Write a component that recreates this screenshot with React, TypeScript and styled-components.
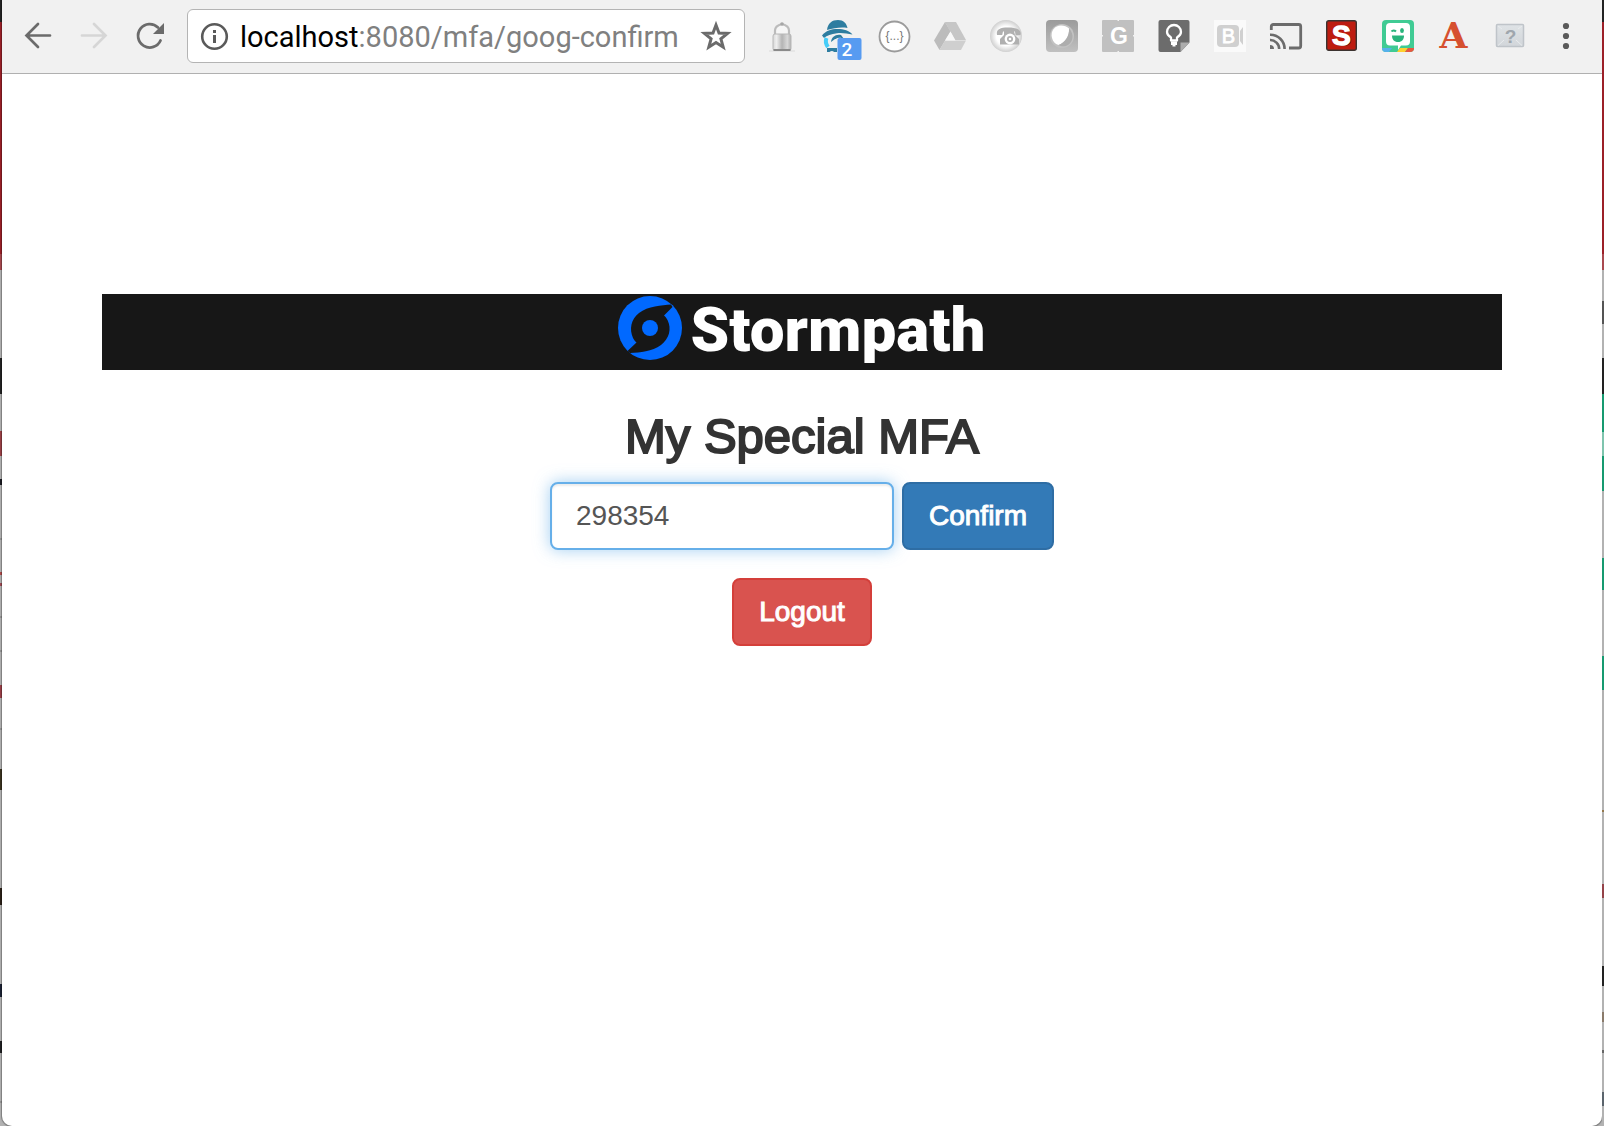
import React, { useState } from "react";
import styled, { createGlobalStyle } from "styled-components";

type Band = [from: number, to: number, color: string];

const GRAY = "#b2b2b2";

const leftBands: Band[] = [
  [0, 22, "#232323"],
  [22, 254, "#9c2028"],
  [254, 270, "#a94a50"],
  [358, 394, "#222222"],
  [431, 456, "#9c4146"],
  [479, 485, "#1b1b22"],
  [538, 540, "#969696"],
  [572, 575, "#b04a4a"],
  [583, 586, "#a04a54"],
  [616, 618, "#969696"],
  [650, 652, "#969696"],
  [685, 698, "#9c3f48"],
  [728, 730, "#969696"],
  [769, 790, "#3b3420"],
  [888, 905, "#2c2118"],
  [984, 997, "#1b2133"],
  [1041, 1053, "#1f2022"],
  [1101, 1103, "#969696"],
];

const rightBands: Band[] = [
  [0, 22, "#232323"],
  [22, 254, "#9c2028"],
  [254, 270, "#a94a50"],
  [301, 324, "#545454"],
  [358, 394, "#222222"],
  [394, 432, "#169a70"],
  [432, 456, "#7fc4ae"],
  [456, 491, "#169a70"],
  [558, 590, "#169a70"],
  [656, 690, "#169a70"],
  [810, 812, "#94784c"],
  [884, 898, "#944349"],
  [966, 986, "#222222"],
  [1012, 1022, "#8a7a6a"],
  [1050, 1053, "#666666"],
  [1092, 1106, "#5a646c"],
];

const toGradient = (bands: Band[]) => {
  const stops: string[] = [];
  let cursor = 0;
  bands.forEach(([from, to, color]) => {
    if (from > cursor) stops.push(`${GRAY} ${cursor}px ${from}px`);
    stops.push(`${color} ${from}px ${to}px`);
    cursor = to;
  });
  stops.push(`${GRAY} ${cursor}px`);
  return `linear-gradient(to bottom, ${stops.join(", ")})`;
};

const GlobalStyle = createGlobalStyle`
  *, *::before, *::after { box-sizing: border-box; }
  body { margin: 0; background: ${GRAY}; }
  button, input { font: inherit; margin: 0; }
`;

const Desktop = styled.div`
  display: flex;
  min-height: 100vh;
  background: ${GRAY};
  font-family: "Liberation Sans", Arial, sans-serif;
`;

const DesktopEdge = styled.div<{ $bands: Band[] }>`
  flex: 0 0 2px;
  background: ${({ $bands }) => toGradient($bands)};
`;

const BrowserWindow = styled.div`
  flex: 1;
  min-width: 0;
  display: flex;
  flex-direction: column;
  background: #fff;
  border-radius: 0 0 10px 10px;
  box-shadow: 0 0 1px 1px rgba(0, 0, 0, 0.3);
  overflow: hidden;
`;

const Toolbar = styled.header`
  display: flex;
  align-items: center;
  gap: 21px;
  padding: 9px 20px 10px;
  background: #f1f1f1;
  border-bottom: 1px solid #b0b0b0;
`;

const IconRow = styled.div`
  display: flex;
  align-items: center;
  gap: 24px;
`;

const IconButton = styled.button`
  flex: none;
  width: 32px;
  height: 32px;
  padding: 0;
  border: 0;
  background: none;
  color: #6b6b6b;
  cursor: pointer;

  &:disabled {
    color: #d6d6d6;
    cursor: default;
  }

  svg {
    display: block;
    overflow: visible;
  }
`;

const AddressBar = styled.div`
  flex: 1;
  min-width: 0;
  height: 54px;
  display: flex;
  align-items: center;
  gap: 9px;
  padding: 0 12px 0 11px;
  background: #fff;
  border: 1px solid #b4b4b4;
  border-radius: 6px;
`;

const Url = styled.div`
  flex: 1;
  min-width: 0;
  padding-top: 2px;
  overflow: hidden;
  white-space: nowrap;
  font-family: Roboto, sans-serif;
  font-size: 29px;
  line-height: 36px;
  color: #808080;
  outline: none;
`;

const Host = styled.span`
  color: #000;
`;

const Page = styled.main`
  display: flex;
  flex-direction: column;
  padding: 220px 100px 0;
`;

const Banner = styled.div`
  display: flex;
  justify-content: center;
  align-items: flex-start;
  gap: 8px;
  height: 76px;
  padding-top: 2px;
  background: #171717;
  color: #fff;
`;

const BrandMark = styled.svg`
  flex: none;
  width: 64px;
  height: 64px;
`;

const BrandName = styled.span`
  font-family: Roboto, "Open Sans", sans-serif;
  font-weight: 900;
  font-size: 62px;
  line-height: 68px;
`;

const Title = styled.h1`
  margin: 40px 0 20px;
  text-align: center;
  font-size: 49px;
  line-height: 52px;
  font-weight: 400;
  color: #333;
  -webkit-text-stroke: 2px #333;
`;

const ConfirmForm = styled.form`
  display: flex;
  justify-content: center;
  gap: 8px;
  margin-bottom: 28px;
`;

const CodeInput = styled.input`
  width: 344px;
  height: 68px;
  padding: 0 24px;
  border: 2px solid #66afe9;
  border-radius: 8px;
  outline: none;
  background: #fff;
  color: #555;
  font-size: 28px;
  box-shadow: inset 0 2px 2px rgba(0, 0, 0, 0.075),
    0 0 16px rgba(102, 175, 233, 0.6);
`;

const ActionButton = styled.button<{ $tone: "primary" | "danger" }>`
  height: 68px;
  padding: 0 25px;
  border: 2px solid ${({ $tone }) => ($tone === "primary" ? "#2e6da4" : "#d43f3a")};
  border-radius: 8px;
  background: ${({ $tone }) => ($tone === "primary" ? "#337ab7" : "#d9534f")};
  color: #fff;
  font-size: 28px;
  -webkit-text-stroke: 1px #fff;
  cursor: pointer;
`;

const LogoutForm = styled.form`
  display: flex;
  justify-content: center;
`;

const Icon = ({ children }: { children: React.ReactNode }) => (
  <svg width="32" height="32" viewBox="0 0 32 32" fill="none" aria-hidden="true">
    {children}
  </svg>
);

const ArrowLeft = () => (
  <Icon>
    <path d="M28 15.5H5M16 4 4.500 15.500 16 27" stroke="currentColor" strokeWidth="2.700" strokeLinecap="round" strokeLinejoin="miter" />
  </Icon>
);

const ArrowRight = () => (
  <Icon>
    <path d="M4 15.500H27M16 4l11.500 11.500L16 27" stroke="currentColor" strokeWidth="2.700" strokeLinecap="round" />
  </Icon>
);

const Reload = () => (
  <Icon>
    <path d="M26.500 20.500A11.700 11.700 0 1 1 24 7.500" stroke="currentColor" strokeWidth="2.800" strokeLinecap="round" />
    <path d="M30 3v11H19z" fill="currentColor" />
  </Icon>
);

const Info = () => (
  <Icon>
    <circle cx="15.500" cy="16.500" r="12.300" stroke="#5a5a5a" strokeWidth="2.600" />
    <path d="M14 10h3v3h-3zM14 15h3v8h-3z" fill="#5a5a5a" />
  </Icon>
);

const Star = () => (
  <Icon>
    <path
      d="M16 5l3 8 8.600.4-6.700 5.400 2.300 8.400L16 22.500l-7.200 4.700 2.300-8.400-6.700-5.400L13 13z"
      stroke="currentColor"
      strokeWidth="3"
    />
  </Icon>
);

const Padlock = () => (
  <Icon>
    <defs>
      <linearGradient id="lockBody">
        <stop offset="0" stopColor="#d8d8d8" />
        <stop offset=".2" stopColor="#eeeeee" />
        <stop offset=".5" stopColor="#b4b4b4" />
        <stop offset=".8" stopColor="#d8d8d8" />
        <stop offset="1" stopColor="#b0b0b0" />
      </linearGradient>
    </defs>
    <path d="M3 31h26" stroke="#e2e2e2" strokeWidth="1.500" />
    <path d="M9 16V10.500C9 7 12 5 16 4c4 1 7 3 7 6.500V16" stroke="#bcbcbc" strokeWidth="2.200" fill="#f6f6f6" />
    <circle cx="16" cy="4" r="1.800" fill="#a6a6a6" />
    <rect x="7" y="14" width="18" height="16.500" rx="2" fill="url(#lockBody)" stroke="#b8b8b8" />
    <path d="M7.500 30h17" stroke="#8a8a8a" strokeWidth="2" />
  </Icon>
);

const Detective = () => (
  <Icon>
    <path d="M5 10C6 3 10 0 16 0c5.500 0 8.500 3 9.500 8C19 7 12 8 5 10z" fill="#2e7da0" />
    <path d="M0 15.500C4 10.500 9 9 15.500 9 22 9 27 10.500 30.500 14.500 25 13.500 20 12.500 15 13.200c-6 .8-10 2-13 4.800z" fill="#2e7da0" />
    <path d="M4.500 18c-1.200 3-.8 6 1.500 9" stroke="#45cdf8" strokeWidth="4" />
    <path d="M9 22c.5-5 4.500-8 10-7l3 4h-9z" fill="#2e7da0" />
    <path d="M13 22c.5-2.500 2.500-4 6-3.500" stroke="#f1f1f1" strokeWidth="1.500" />
    <path d="M5 28h10v4h-3c-1-1.500-3-1.500-4.500 0H5z" fill="#2e7da0" />
    <rect x="15.500" y="18" width="24" height="22" rx="2" fill="#579bf1" />
    <text x="25" y="36" textAnchor="middle" fontFamily="Roboto, sans-serif" fontWeight="500" fontSize="19" fill="#fff">2</text>
  </Icon>
);

const Braces = () => (
  <Icon>
    <circle cx="16.500" cy="16.500" r="15" fill="#fff" stroke="#9b9b9b" strokeWidth="1.800" />
    <text x="16.500" y="20" textAnchor="middle" fontFamily="Liberation Sans, sans-serif" fontSize="12" fill="#777">{"{...}"}</text>
  </Icon>
);

const Drive = () => (
  <Icon>
    <path d="M11 2h11l10 18H21z" fill="#c6c6c6" />
    <path d="M11 2 0 20.500 5.500 30 16.500 11.500z" fill="#bcbcbc" />
    <path d="M11 20.500h21L27 30H5.500z" fill="#cfcfcf" />
    <path d="M16.500 11.500 11 20.500h10.500z" fill="#f8f8f8" />
  </Icon>
);

const Phone = () => (
  <Icon>
    <defs>
      <radialGradient id="phoneDisc">
        <stop offset=".6" stopColor="#fff" />
        <stop offset="1" stopColor="#cfcfcf" />
      </radialGradient>
    </defs>
    <circle cx="16" cy="16" r="16" fill="url(#phoneDisc)" />
    <path d="M7 15c-1-5 2-7.500 11-7.500S32 10 30.500 15l-5 .5-.5-4H13l-.8 3.500z" fill="#b0b0b0" />
    <path d="M14 11h10l1 4 4 4v5.500H10V19l4-4z" fill="#b0b0b0" />
    <circle cx="20" cy="19" r="5.400" fill="#fff" />
    <circle cx="20" cy="19" r="3" fill="#b0b0b0" />
    <circle cx="20" cy="19" r="1.300" fill="#fff" />
  </Icon>
);

const Moon = () => (
  <Icon>
    <defs>
      <linearGradient id="moonTile" x2="0" y2="1">
        <stop offset="0" stopColor="#9b9b9b" />
        <stop offset="1" stopColor="#c0c0c0" />
      </linearGradient>
    </defs>
    <rect width="32" height="32" rx="4" fill="url(#moonTile)" />
    <circle cx="16" cy="16" r="12" fill="#c2c2c2" />
    <path d="M6 18C4 11 9 5.500 15 5.500c3 0 6 1 8 3 .5 8-4 14-10.500 16.500C9 24 7 21.500 6 18z" fill="#fff" />
    <path d="M23 8.500c6 6 4 15-3 17.500-3 .8-5.500.2-7.500-1C19 22.500 23.500 16.500 23 8.500z" fill="#adadad" />
  </Icon>
);

const LetterG = () => (
  <Icon>
    <rect width="32" height="32" rx="1" fill="#c0c0c0" />
    <path d="M15.500 0h1.500v1h-1.500zM15.500 31h1.500v1h-1.500zM0 15h1v1.500H0zM31 15h1v1.500h-1z" fill="#f1f1f1" />
    <text x="17" y="24" textAnchor="middle" fontFamily="Liberation Sans, sans-serif" fontWeight="700" fontSize="23" fill="#fff">G</text>
  </Icon>
);

const Keep = () => (
  <Icon>
    <path d="M2 0h27.500a2 2 0 0 1 2 2v20.500L22.500 32H2.500a2 2 0 0 1-2-2V2a2 2 0 0 1 2-2z" fill="#6c6c6c" />
    <path d="M22.500 22.500h9L22.500 32z" fill="#adadad" />
    <path d="M13 20.500v-3C10.500 16 9 14 9 12a7 7 0 1 1 14 0c0 2-1.500 4-4 5.500v3z" stroke="#fff" strokeWidth="2.300" strokeLinejoin="round" />
    <path d="M13 21.500h6v3.500h-6zM14.500 25h3v1.500h-3z" fill="#fff" />
  </Icon>
);

const LetterB = () => (
  <Icon>
    <rect width="32" height="32" fill="#fafafa" />
    <rect x="3" y="5" width="22" height="22" rx="4" fill="#d0d0d0" />
    <path d="M26 11v10l3 4V7z" fill="#d0d0d0" />
    <text x="14.500" y="23" textAnchor="middle" fontFamily="Liberation Sans, sans-serif" fontSize="20" fill="#fff" stroke="#fff" strokeWidth=".8">B</text>
  </Icon>
);

const Cast = () => (
  <Icon>
    <path d="M1.300 10V6.500a2 2 0 0 1 2-2h25.400a2 2 0 0 1 2 2V26a2 2 0 0 1-2 2H19" stroke="currentColor" strokeWidth="2.800" />
    <path d="M0 14.700A14.300 14.300 0 0 1 14.600 29M0 20a9 9 0 0 1 9.200 9" stroke="currentColor" strokeWidth="2.600" />
    <path d="M0 25a4 4 0 0 1 4 4H0z" fill="currentColor" />
  </Icon>
);

const LetterS = () => (
  <Icon>
    <rect x=".7" y=".7" width="29.600" height="29.600" rx="2" fill="#bd1c10" stroke="#3c3330" strokeWidth="1.400" />
    <text x="16.500" y="26" textAnchor="middle" fontFamily="Liberation Sans, sans-serif" fontWeight="700" fontSize="29" fill="#5f0d08">S</text>
    <text x="15.300" y="25" textAnchor="middle" fontFamily="Liberation Sans, sans-serif" fontWeight="700" fontSize="28" fill="#fff" stroke="#fff" strokeWidth="1.400">S</text>
  </Icon>
);

const Bitmoji = () => (
  <Icon>
    <rect width="32" height="32" rx="4" fill="#40cb94" />
    <path d="M0 28h10l-3 4H4a4 4 0 0 1-4-4z" fill="#56b1ec" />
    <path d="M18 28h8l-3 4h-8z" fill="#ffd02e" />
    <path d="M26 28h6a4 4 0 0 1-4 4h-5z" fill="#e8573f" />
    <path d="M8 3h16a4 4 0 0 1 4 4v14.500a4 4 0 0 1-4 4h-5L16 30v-4.500H8a4 4 0 0 1-4-4V7a4 4 0 0 1 4-4z" fill="#fff" />
    <path d="M10 15.500h12c0 4-2 6.500-6 6.500s-6-2.500-6-6.500z" fill="#28b47c" />
    <path d="M9.500 11.500c1-1.500 3-1.500 4.500 0" stroke="#28b47c" strokeWidth="2" />
    <ellipse cx="20" cy="10.500" rx="1.900" ry="2.600" fill="#28b47c" />
  </Icon>
);

const LetterA = () => (
  <Icon>
    <text x="15.500" y="28" textAnchor="middle" fontFamily="DejaVu Serif, serif" fontWeight="700" fontSize="36" fill="#d6502f">A</text>
  </Icon>
);

const Unknown = () => (
  <Icon>
    <defs>
      <linearGradient id="unknownTile" x2="0" y2="1">
        <stop offset="0" stopColor="#dfe3e6" />
        <stop offset="1" stopColor="#d2d6da" />
      </linearGradient>
    </defs>
    <rect x="2.500" y="4.500" width="27" height="22" rx="1" fill="url(#unknownTile)" stroke="#bfc4c9" strokeWidth="1.500" />
    <path d="M4 25.500 10 20M28 25.500 22 20M4 6l4 3M28 6l-4 3" stroke="#e9ecee" />
    <text x="16.500" y="22.500" textAnchor="middle" fontFamily="Liberation Sans, sans-serif" fontWeight="700" fontSize="19" fill="#9fa6ad">?</text>
  </Icon>
);

const Kebab = () => (
  <Icon>
    <g fill="#5a5a5a">
      <circle cx="16" cy="6" r="3.100" />
      <circle cx="16" cy="16" r="3.100" />
      <circle cx="16" cy="26" r="3.100" />
    </g>
  </Icon>
);

const tools: [string, React.FC][] = [
  ["Padlock", Padlock],
  ["Privacy guard", Detective],
  ["JSON viewer", Braces],
  ["Drive", Drive],
  ["Phone", Phone],
  ["Moon", Moon],
  ["G tool", LetterG],
  ["Notes", Keep],
  ["B video", LetterB],
  ["Cast", Cast],
  ["S tool", LetterS],
  ["Stickers", Bitmoji],
  ["A tool", LetterA],
  ["Unknown extension", Unknown],
  ["Menu", Kebab],
];

const stay = (event: React.FormEvent) => event.preventDefault();

export default function App() {
  const [code, setCode] = useState("298354");

  return (
    <>
      <GlobalStyle />
      <Desktop>
        <DesktopEdge $bands={leftBands} />
        <BrowserWindow>
          <Toolbar>
            <IconRow>
              <IconButton type="button" aria-label="Back"><ArrowLeft /></IconButton>
              <IconButton type="button" aria-label="Forward" disabled><ArrowRight /></IconButton>
              <IconButton type="button" aria-label="Reload"><Reload /></IconButton>
            </IconRow>
            <AddressBar>
              <IconButton type="button" aria-label="Site information"><Info /></IconButton>
              <Url role="textbox" aria-label="Address" tabIndex={0}>
                <Host>localhost</Host>:8080/mfa/goog-confirm
              </Url>
              <IconButton type="button" aria-label="Bookmark"><Star /></IconButton>
            </AddressBar>
            <IconRow>
              {tools.map(([name, Glyph]) => (
                <IconButton key={name} type="button" aria-label={name}><Glyph /></IconButton>
              ))}
            </IconRow>
          </Toolbar>
          <Page>
            <Banner>
              <BrandMark viewBox="0 0 64 64" aria-hidden="true">
                <circle cx="32" cy="32" r="32" fill="#0169ff" />
                <path
                  d="M53 8.500C44 9.500 30 10 21 17c-8 6-10 16-6 25 1 2 2 3 3.500 4.500L9.500 55l2.500 2c10-.5 22-1.500 31-8 8-6 11-16 6.500-25-1-2-2-3-3.500-4.500l8.500-8.500z"
                  fill="#171717"
                />
                <circle cx="32" cy="32" r="8" fill="#0169ff" />
              </BrandMark>
              <BrandName>Stormpath</BrandName>
            </Banner>
            <Title>My Special MFA</Title>
            <ConfirmForm onSubmit={stay}>
              <CodeInput
                type="text"
                aria-label="Verification code"
                value={code}
                onChange={(event) => setCode(event.target.value)}
              />
              <ActionButton type="submit" $tone="primary">Confirm</ActionButton>
            </ConfirmForm>
            <LogoutForm onSubmit={stay}>
              <ActionButton type="submit" $tone="danger">Logout</ActionButton>
            </LogoutForm>
          </Page>
        </BrowserWindow>
        <DesktopEdge $bands={rightBands} />
      </Desktop>
    </>
  );
}
